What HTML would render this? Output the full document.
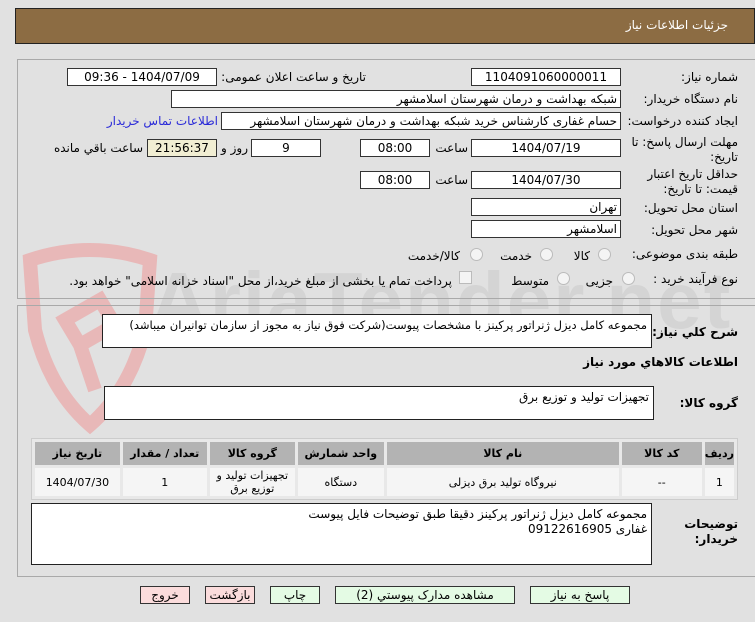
<!DOCTYPE html>
<html><head><meta charset="utf-8"><style>
*{margin:0;padding:0;box-sizing:border-box}
body{width:755px;height:622px;background:#e1e1e1;font-family:"DejaVu Sans","Liberation Sans",sans-serif;font-size:12px;color:#000;position:relative;overflow:hidden}
.a{position:absolute;white-space:nowrap}
.hdr{left:15px;top:8px;width:740px;height:36px;background:#8c6c43;border:1px solid #222}
.panel{position:absolute;left:17px;width:740px;border:1px solid #a9a9a9;background:#e4e4e4}
.in{position:absolute;background:#fff;border:1px solid #333;height:18px;line-height:16px;font-size:12px;direction:rtl;padding:0 3px}
.c{text-align:center}
.lbl{position:absolute;direction:rtl;white-space:nowrap;font-size:12px}
.b{font-weight:bold}
.ta{position:absolute;background:#fff;border:1px solid #222;direction:rtl;padding:3px 4px;font-size:12px;line-height:15px}
.rad{position:absolute;width:13px;height:13px;border-radius:50%;border:1px solid #bbb;background:#f4f4f4}
.btn{position:absolute;top:586px;height:18px;border:1px solid #333;font-size:12px;text-align:center;line-height:16px}
table{position:absolute;left:31px;top:438px;width:707px;border-collapse:separate;border-spacing:3px;background:#e8e8e8;border:1px solid #ccc;direction:rtl}
td{text-align:center;font-size:11px}
th{background:#b3b3b3;height:23px;font-size:11px}
td{background:#f5f5f5;height:28px;line-height:13px}
</style></head><body>
<div class="a hdr"></div>
<div class="lbl" style="right:27px;top:18px;color:#fff;font-size:12px">جزئیات اطلاعات نیاز</div>

<!-- watermark -->
<svg class="a" style="left:20px;top:240px" width="140" height="200" viewBox="0 0 140 200">
<path d="M10 20 Q70 0 130 20 L125 90 Q110 150 70 185 Q30 150 15 90 Z" fill="none" stroke="#e8b8b8" stroke-width="14"/>
<path d="M45 80 L80 60 L95 85 L60 105 Z M60 105 L75 150" fill="none" stroke="#e8b8b8" stroke-width="14"/>
</svg>
<div class="a" style="left:150px;top:255px;font-size:80px;color:#d4d4d4;font-family:'Liberation Sans',sans-serif;font-weight:bold;letter-spacing:2px">AriaTender.net</div>

<div class="panel" style="top:59px;height:240px;background:transparent"></div>
<div class="panel" style="top:305px;height:272px;background:transparent"></div>

<div class="lbl" style="right:17px;top:70px">شماره نیاز:</div>
<div class="in c" style="left:471px;top:68px;width:150px">1104091060000011</div>
<div class="lbl" style="right:389px;top:70px">تاریخ و ساعت اعلان عمومی:</div>
<div class="in c" style="left:67px;top:68px;width:150px">1404/07/09 - 09:36</div>

<div class="lbl" style="right:17px;top:92px">نام دستگاه خریدار:</div>
<div class="in" style="left:171px;top:90px;width:450px">شبکه بهداشت و درمان شهرستان اسلامشهر</div>

<div class="lbl" style="right:17px;top:114px">ایجاد کننده درخواست:</div>
<div class="in" style="left:221px;top:112px;width:400px">حسام غفاری کارشناس خرید شبکه بهداشت و درمان شهرستان اسلامشهر</div>
<div class="lbl" style="right:537px;top:114px;color:#2a2ad8">اطلاعات تماس خریدار</div>

<div class="lbl" style="right:17px;top:135px;line-height:15px;text-align:right">مهلت ارسال پاسخ: تا<br>تاریخ:</div>
<div class="in c" style="left:471px;top:139px;width:150px">1404/07/19</div>
<div class="lbl" style="right:287px;top:141px">ساعت</div>
<div class="in c" style="left:360px;top:139px;width:70px">08:00</div>
<div class="in c" style="left:251px;top:139px;width:70px">9</div>
<div class="lbl" style="right:507px;top:141px">روز و</div>
<div class="in c" style="left:147px;top:139px;width:70px;background:#f1eed3">21:56:37</div>
<div class="lbl" style="right:612px;top:141px">ساعت باقي مانده</div>

<div class="lbl" style="right:17px;top:167px;line-height:15px;text-align:right">حداقل تاریخ اعتبار<br>قیمت: تا تاریخ:</div>
<div class="in c" style="left:471px;top:171px;width:150px">1404/07/30</div>
<div class="lbl" style="right:287px;top:173px">ساعت</div>
<div class="in c" style="left:360px;top:171px;width:70px">08:00</div>

<div class="lbl" style="right:17px;top:201px">استان محل تحویل:</div>
<div class="in" style="left:471px;top:198px;width:150px">تهران</div>
<div class="lbl" style="right:17px;top:223px">شهر محل تحویل:</div>
<div class="in" style="left:471px;top:220px;width:150px">اسلامشهر</div>

<div class="lbl" style="right:17px;top:247px">طبقه بندی موضوعی:</div>
<div class="rad" style="left:598px;top:248px"></div><div class="lbl" style="right:165px;top:249px">کالا</div>
<div class="rad" style="left:540px;top:248px"></div><div class="lbl" style="right:223px;top:249px">خدمت</div>
<div class="rad" style="left:470px;top:248px"></div><div class="lbl" style="right:295px;top:249px">کالا/خدمت</div>

<div class="lbl" style="right:17px;top:272px">نوع فرآیند خرید :</div>
<div class="rad" style="left:622px;top:272px"></div><div class="lbl" style="right:142px;top:274px">جزیی</div>
<div class="rad" style="left:557px;top:272px"></div><div class="lbl" style="right:206px;top:274px">متوسط</div>
<div class="a" style="left:459px;top:271px;width:13px;height:13px;border:1px solid #bbb;background:#f4f4f4"></div>
<div class="lbl" style="right:303px;top:274px">پرداخت تمام یا بخشی از مبلغ خرید،از محل "اسناد خزانه اسلامی" خواهد بود.</div>

<div class="lbl b" style="right:17px;top:325px">شرح کلي نیاز:</div>
<div class="ta" style="left:102px;top:314px;width:550px;height:34px;white-space:nowrap;overflow:hidden;font-size:11.5px;letter-spacing:-0.2px">مجموعه کامل دیزل ژنراتور پرکینز با مشخصات پیوست(شرکت فوق نیاز به مجوز از سازمان توانیران میباشد)</div>
<div class="lbl b" style="right:17px;top:355px">اطلاعات کالاهاي مورد نیاز</div>
<div class="lbl b" style="right:17px;top:396px">گروه کالا:</div>
<div class="ta" style="left:104px;top:386px;width:550px;height:34px">تجهیزات تولید و توزیع برق</div>

<table>
<tr><th style="width:26px">ردیف</th><th style="width:80px">کد کالا</th><th style="width:232px">نام کالا</th><th style="width:86px">واحد شمارش</th><th style="width:85px">گروه کالا</th><th style="width:84px">تعداد / مقدار</th><th>تاریخ نیاز</th></tr>
<tr><td>1</td><td>--</td><td>نیروگاه تولید برق دیزلی</td><td>دستگاه</td><td>تجهیزات تولید و<br>توزیع برق</td><td>1</td><td>1404/07/30</td></tr>
</table>

<div class="lbl b" style="right:17px;top:517px;line-height:15px">توضیحات<br>خریدار:</div>
<div class="ta" style="left:31px;top:503px;width:621px;height:62px">مجموعه کامل دیزل ژنراتور پرکینز دقیقا طبق توضیحات فایل پیوست<br>غفاری 09122616905</div>

<div class="btn" style="left:530px;width:100px;background:#e4fbe4">پاسخ به نیاز</div>
<div class="btn" style="left:335px;width:180px;background:#e4fbe4">مشاهده مدارک پیوستي (2)</div>
<div class="btn" style="left:270px;width:50px;background:#e4fbe4">چاپ</div>
<div class="btn" style="left:205px;width:50px;background:#fbdcdc">بازگشت</div>
<div class="btn" style="left:140px;width:50px;background:#fbdcdc">خروج</div>
</body></html>
